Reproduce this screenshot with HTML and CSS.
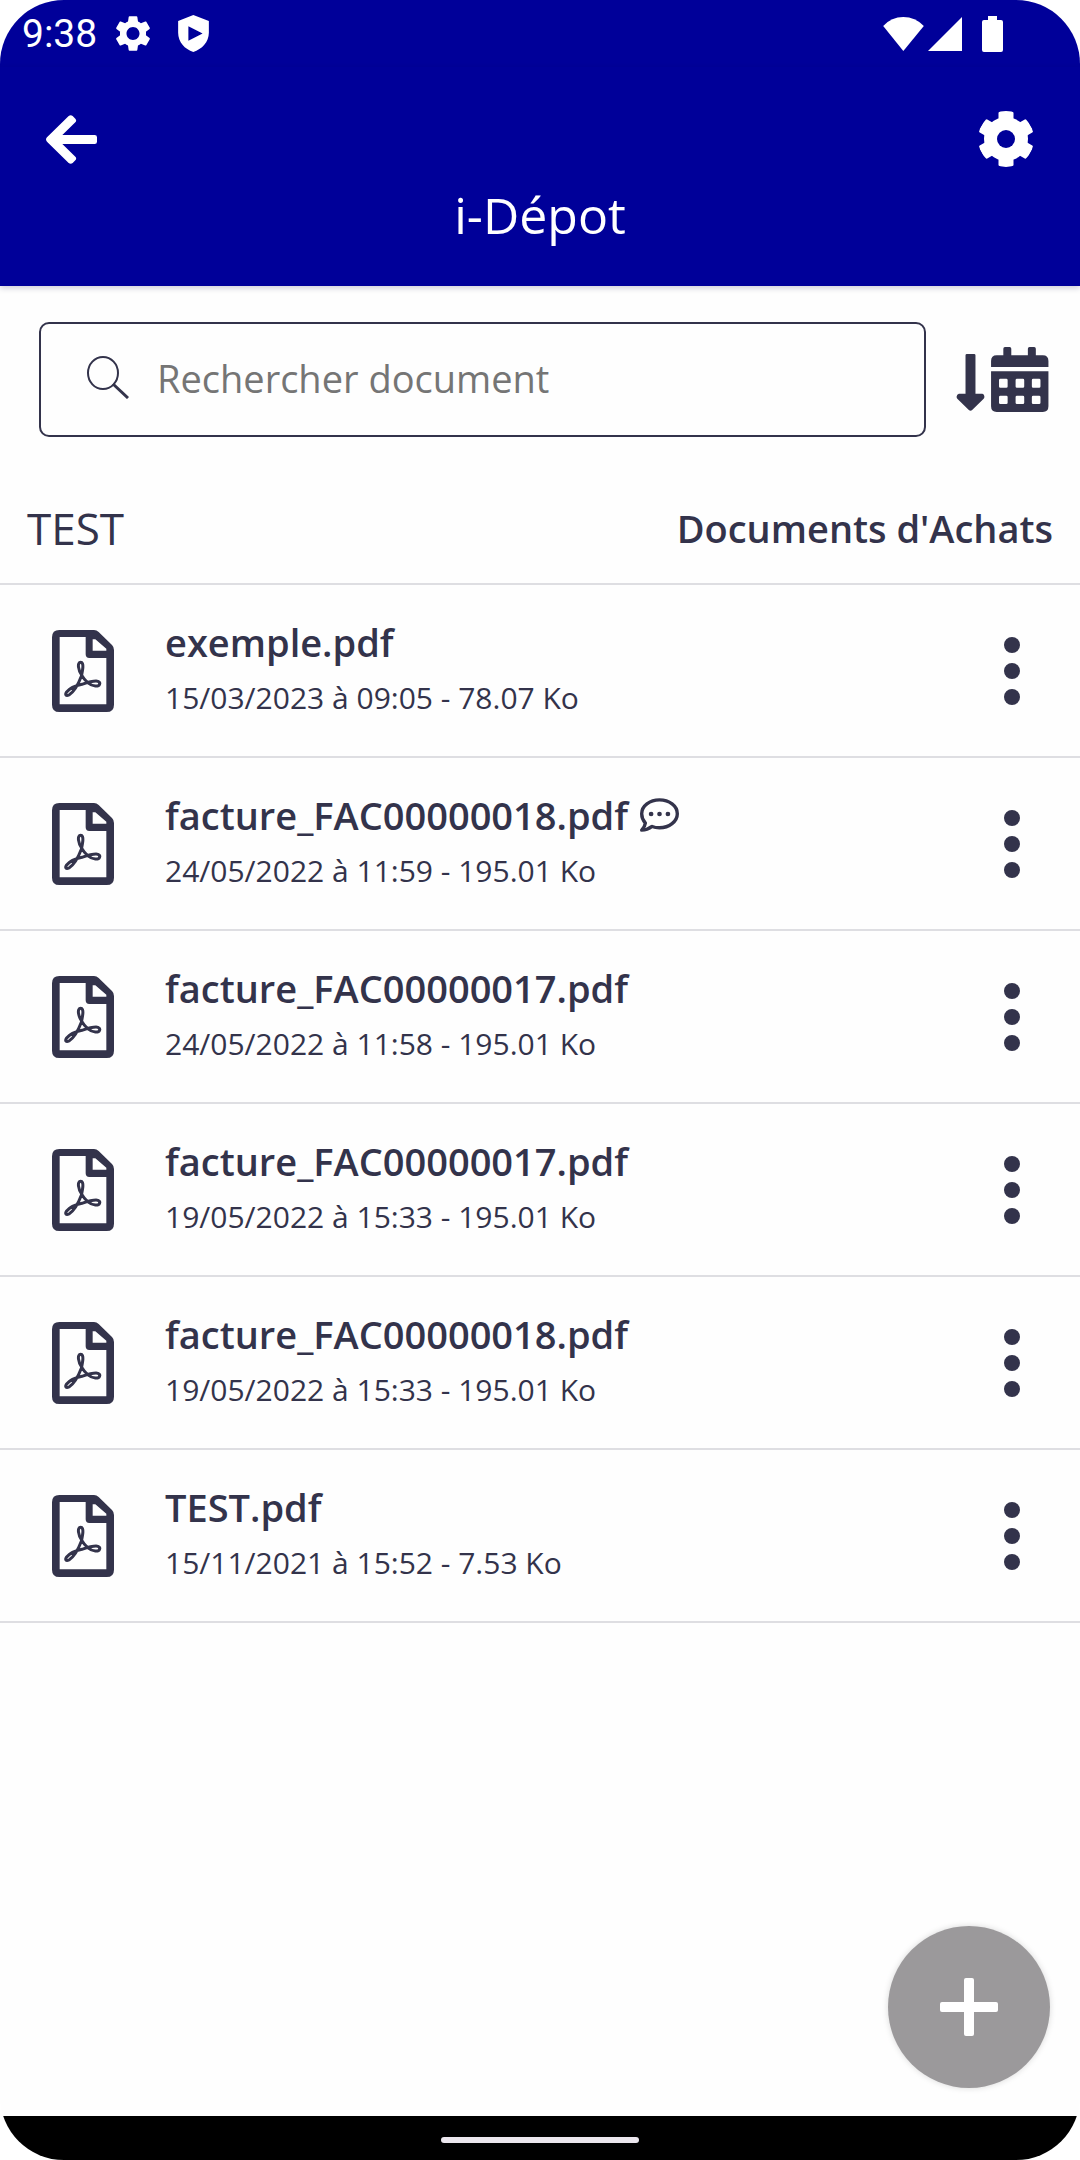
FILE: index.html
```html
<!DOCTYPE html>
<html lang="fr">
<head>
    <meta charset="UTF-8">
    <meta name="viewport" content="width=device-width, initial-scale=1.0">
    <title>i-Dépot</title>
    <link rel="stylesheet" href="styles.css">
</head>
<body>

    <!-- Icônes partagées -->
    <svg class="sprite" aria-hidden="true">
        <symbol id="icon-pdf" viewBox="0 0 186 246">
            <path fill="currentColor" fill-rule="evenodd" d="M22 0H126Q134 0 140 6L180 45Q186 51 186 60V224Q186 246 164 246H22Q0 246 0 224V22Q0 0 22 0ZM23 21V223H163V84H112Q101 84 101 73V21ZM122 28V62H163V56L130 28Z"/>
            <path fill="none" stroke="currentColor" stroke-width="9" stroke-linejoin="round" d="M90 137C78 120 75 97 86 97C97 97 92 120 88 139C80 160 66 186 51 195C42 199 38 194 44 186C52 176 72 167 90 163C108 157 128 151 138 154C147 158 144 169 130 168C114 167 98 152 90 137Z"/>
        </symbol>
        <symbol id="icon-dots" viewBox="0 0 18 70">
            <circle cx="9" cy="9" r="8" fill="currentColor"/>
            <circle cx="9" cy="35" r="8" fill="currentColor"/>
            <circle cx="9" cy="61" r="8" fill="currentColor"/>
        </symbol>
    </svg>

    <div class="screen">
        <!-- Barre d'état -->
        <div class="status-bar">
            <span class="time">9:38</span>
            <svg class="status-gear" viewBox="2.6 2.4 18.8 19.2" aria-hidden="true"><path fill="currentColor" d="M19.14,12.94c0.04-0.3,0.06-0.61,0.06-0.94c0-0.32-0.02-0.64-0.07-0.94l2.03-1.58c0.18-0.14,0.23-0.41,0.12-0.61l-1.92-3.32c-0.12-0.22-0.37-0.29-0.59-0.22l-2.39,0.96c-0.5-0.38-1.03-0.7-1.62-0.94L14.4,2.81c-0.04-0.24-0.24-0.41-0.48-0.41h-3.84c-0.24,0-0.43,0.17-0.47,0.41L9.25,5.35C8.66,5.59,8.12,5.92,7.63,6.29L5.24,5.33c-0.22-0.08-0.47,0-0.59,0.22L2.74,8.87C2.62,9.08,2.66,9.34,2.86,9.48l2.03,1.58C4.84,11.36,4.8,11.69,4.8,12s0.02,0.64,0.07,0.94l-2.03,1.58c-0.18,0.14-0.23,0.41-0.12,0.61l1.92,3.32c0.12,0.22,0.37,0.29,0.59,0.22l2.39-0.96c0.5,0.38,1.03,0.7,1.62,0.94l0.36,2.54c0.05,0.24,0.24,0.41,0.48,0.41h3.84c0.24,0,0.44-0.17,0.47-0.41l0.36-2.54c0.59-0.24,1.13-0.56,1.62-0.94l2.39,0.96c0.22,0.08,0.47,0,0.59-0.22l1.92-3.32c0.12-0.22,0.07-0.47-0.12-0.61L19.14,12.94z M12,15.6c-1.98,0-3.6-1.62-3.6-3.6s1.62-3.6,3.6-3.6s3.6,1.62,3.6,3.6S13.98,15.6,12,15.6z"/></svg>
            <svg class="status-shield" viewBox="0 0 93 112" aria-hidden="true"><path fill="currentColor" fill-rule="evenodd" d="M46 0L93 18V54C93 82 72 104 46 112C20 104 0 82 0 54V18ZM31 34V78L74 56Z"/></svg>
            <div class="status-right">
                <svg class="status-wifi" viewBox="0 0 123 103" aria-hidden="true"><path fill="currentColor" d="M61 103L0 27Q25 0 61 0T123 27Z"/></svg>
                <svg class="status-signal" viewBox="0 0 34 34" aria-hidden="true"><path fill="currentColor" d="M0 34L34 0V34Z"/></svg>
                <svg class="status-battery" viewBox="0 0 63 108" aria-hidden="true"><path fill="currentColor" d="M18 0H45V12H57Q63 12 63 18V102Q63 108 57 108H6Q0 108 0 102V18Q0 12 6 12H18Z"/></svg>
            </div>
        </div>

        <!-- En-tête -->
        <header>
            <div class="toolbar">
                <button type="button" class="icon-button" aria-label="Retour">
                    <svg class="icon-back" viewBox="0 0 153 147" fill="currentColor" aria-hidden="true">
                        <path d="M3 67L68 3Q74-2 80 3L88 11Q93 17 88 22L49 60H146Q153 60 153 67V80Q153 87 146 87H49L88 125Q93 130 88 136L80 144Q74 149 68 144L3 80Q-3 73 3 67Z"/>
                    </svg>
                </button>
                <button type="button" class="icon-button" aria-label="Paramètres">
                    <svg class="icon-settings" viewBox="-28 -29 56 58" aria-hidden="true">
                        <mask id="gear-hole">
                            <circle r="28" fill="white"/>
                            <circle r="9" fill="black"/>
                        </mask>
                        <g fill="currentColor" mask="url(#gear-hole)">
                            <circle r="22"/>
                            <rect x="-7.500" y="-28" width="15" height="56" rx="2"/>
                            <rect x="-7.500" y="-28" width="15" height="56" rx="2" transform="rotate(60)"/>
                            <rect x="-7.500" y="-28" width="15" height="56" rx="2" transform="rotate(120)"/>
                        </g>
                    </svg>
                </button>
            </div>
            <h1>i-Dépot</h1>
        </header>

        <main>
            <!-- Recherche et tri -->
            <form class="search-bar">
                <label class="search-box">
                    <svg class="icon-search" viewBox="0 0 43 43" fill="none" stroke="currentColor" aria-hidden="true">
                        <ellipse cx="16" cy="17" rx="15" ry="16" stroke-width="2"/>
                        <path d="M26 28L41 42" stroke-width="3"/>
                    </svg>
                    <input type="search" placeholder="Rechercher document" aria-label="Rechercher document">
                </label>
                <button type="button" class="icon-button" aria-label="Trier par date">
                    <svg class="icon-sort" viewBox="0 0 277 196" fill="currentColor" aria-hidden="true">
                        <path d="M31 21H53Q57 21 57 25V141H78Q84 142 84 150Q84 154 81 157L47 190Q42 195 37 190L3 157Q0 154 0 150Q1 142 7 141H27V25Q27 21 31 21Z"/>
                        <path d="M104 60V42Q104 25 121 25H141V5Q141 0 146 0H160Q165 0 165 5V25H215V5Q215 0 220 0H234Q239 0 239 5V25H260Q277 25 277 42V60Z"/>
                        <path fill-rule="evenodd" d="M104 73H277V179Q277 196 260 196H121Q104 196 104 179ZM132 96Q128 96 128 100V119Q128 123 132 123H150Q154 123 154 119V100Q154 96 150 96ZM182 96Q178 96 178 100V119Q178 123 182 123H200Q204 123 204 119V100Q204 96 200 96ZM231 96Q227 96 227 100V119Q227 123 231 123H249Q253 123 253 119V100Q253 96 249 96ZM132 147Q128 147 128 151V168Q128 172 132 172H150Q154 172 154 168V151Q154 147 150 147ZM182 147Q178 147 178 151V168Q178 172 182 172H200Q204 172 204 168V151Q204 147 200 147ZM231 147Q227 147 227 151V168Q227 172 231 172H249Q253 172 253 168V151Q253 147 249 147Z"/>
                    </svg>
                </button>
            </form>

            <div class="folder">
                <span class="folder-name">TEST</span>
                <h2>Documents d'Achats</h2>
            </div>

            <!-- Liste des documents -->
            <ul class="documents">
                <li class="document">
                    <svg class="icon-pdf" aria-hidden="true"><use href="#icon-pdf"/></svg>
                    <div class="document-info">
                        <a href="#" class="document-name">exemple.pdf</a>
                        <p>15/03/2023 à 09:05 - 78.07 Ko</p>
                    </div>
                    <button type="button" class="icon-button" aria-label="Options"><svg class="icon-dots" aria-hidden="true"><use href="#icon-dots"/></svg></button>
                </li>
                <li class="document">
                    <svg class="icon-pdf" aria-hidden="true"><use href="#icon-pdf"/></svg>
                    <div class="document-info">
                        <a href="#" class="document-name">facture_FAC00000018.pdf
                            <svg class="icon-comment" viewBox="0 0 116 100" aria-hidden="true">
                                <path fill="none" stroke="currentColor" stroke-width="10" stroke-linejoin="round" d="M58 5C87 5 111 23 111 46S87 88 58 88C50 88 43 87 36 84C27 91 17 95 5 95C11 89 15 82 16 74C9 66 5 56 5 46C5 23 29 5 58 5Z"/>
                                <circle cx="33" cy="47" r="7" fill="currentColor"/>
                                <circle cx="58" cy="47" r="7" fill="currentColor"/>
                                <circle cx="83" cy="47" r="7" fill="currentColor"/>
                            </svg>
                        </a>
                        <p>24/05/2022 à 11:59 - 195.01 Ko</p>
                    </div>
                    <button type="button" class="icon-button" aria-label="Options"><svg class="icon-dots" aria-hidden="true"><use href="#icon-dots"/></svg></button>
                </li>
                <li class="document">
                    <svg class="icon-pdf" aria-hidden="true"><use href="#icon-pdf"/></svg>
                    <div class="document-info">
                        <a href="#" class="document-name">facture_FAC00000017.pdf</a>
                        <p>24/05/2022 à 11:58 - 195.01 Ko</p>
                    </div>
                    <button type="button" class="icon-button" aria-label="Options"><svg class="icon-dots" aria-hidden="true"><use href="#icon-dots"/></svg></button>
                </li>
                <li class="document">
                    <svg class="icon-pdf" aria-hidden="true"><use href="#icon-pdf"/></svg>
                    <div class="document-info">
                        <a href="#" class="document-name">facture_FAC00000017.pdf</a>
                        <p>19/05/2022 à 15:33 - 195.01 Ko</p>
                    </div>
                    <button type="button" class="icon-button" aria-label="Options"><svg class="icon-dots" aria-hidden="true"><use href="#icon-dots"/></svg></button>
                </li>
                <li class="document">
                    <svg class="icon-pdf" aria-hidden="true"><use href="#icon-pdf"/></svg>
                    <div class="document-info">
                        <a href="#" class="document-name">facture_FAC00000018.pdf</a>
                        <p>19/05/2022 à 15:33 - 195.01 Ko</p>
                    </div>
                    <button type="button" class="icon-button" aria-label="Options"><svg class="icon-dots" aria-hidden="true"><use href="#icon-dots"/></svg></button>
                </li>
                <li class="document">
                    <svg class="icon-pdf" aria-hidden="true"><use href="#icon-pdf"/></svg>
                    <div class="document-info">
                        <a href="#" class="document-name">TEST.pdf</a>
                        <p>15/11/2021 à 15:52 - 7.53 Ko</p>
                    </div>
                    <button type="button" class="icon-button" aria-label="Options"><svg class="icon-dots" aria-hidden="true"><use href="#icon-dots"/></svg></button>
                </li>
            </ul>

            <!-- Bouton flottant -->
            <button type="button" class="add-button" aria-label="Ajouter un document">
                <svg class="icon-plus" viewBox="0 0 58 58" fill="currentColor" aria-hidden="true">
                    <rect x="24" y="0" width="10" height="58" rx="2"/>
                    <rect x="0" y="24" width="58" height="10" rx="2"/>
                </svg>
            </button>
        </main>

        <!-- Barre de navigation du téléphone -->
        <div class="system-bar"><span class="handle"></span></div>
    </div>

</body>
</html>
```

FILE: styles.css
```css
* {
    box-sizing: border-box;
}

body {
    margin: 0;
    font-family: 'Open Sans', 'Noto Sans', sans-serif;
    background: #fff;
    color: #33334b;
}

.sprite {
    display: none;
}

svg {
    display: block;
    flex: none;
}

.screen {
    display: flex;
    flex-direction: column;
    min-height: 100vh;
    border-radius: 64px;
    overflow: hidden;
    background: #fefefe;
}

.icon-button {
    display: flex;
    padding: 0;
    border: none;
    background: none;
    color: inherit;
    cursor: pointer;
}

/* Barre d'état */
.status-bar {
    display: flex;
    align-items: center;
    height: 67px;
    padding: 0 77px 0 22px;
    background: #000099;
    color: #fff;
}

.time {
    margin-right: 19px;
    font-family: Roboto, sans-serif;
    font-size: 39px;
}

.status-gear {
    width: 34px;
    height: 35px;
    margin-right: 28px;
}

.status-shield {
    width: 31px;
    height: 37px;
}

.status-right {
    display: flex;
    align-items: center;
    margin-left: auto;
}

.status-wifi {
    width: 41px;
    height: 34px;
    margin-right: 4px;
}

.status-signal {
    width: 34px;
    height: 34px;
    margin-right: 20px;
}

.status-battery {
    width: 21px;
    height: 36px;
}

/* En-tête */
header {
    height: 219px;
    padding: 42px 46px 0;
    background: #000099;
    color: #fff;
    box-shadow: 0 2px 6px rgba(0, 0, 60, 0.2);
    z-index: 1;
}

.toolbar {
    display: flex;
    justify-content: space-between;
    align-items: center;
    height: 60px;
}

.icon-back {
    width: 51px;
    height: 49px;
}

.icon-settings {
    width: 56px;
    height: 58px;
}

h1 {
    margin: 11px 0 0;
    font-size: 50px;
    font-weight: 400;
    line-height: 70px;
    text-align: center;
}

/* Contenu principal */
main {
    position: relative;
    flex: 1;
}

.search-bar {
    display: flex;
    align-items: center;
    gap: 30px;
    padding: 36px 31px 25px 39px;
}

.search-box {
    display: flex;
    flex: 1;
    align-items: center;
    gap: 27px;
    height: 115px;
    padding: 0 46px 4px;
    border: 2px solid #33334b;
    border-radius: 10px;
}

.search-box input {
    flex: 1;
    min-width: 0;
    padding: 0;
    border: none;
    outline: none;
    background: none;
    font: inherit;
    font-size: 38px;
    color: inherit;
}

.search-box input::placeholder {
    color: #757575;
    opacity: 1;
}

.icon-search {
    width: 43px;
    height: 43px;
}

.icon-sort {
    width: 93px;
    height: 65px;
}

.folder {
    display: flex;
    justify-content: space-between;
    align-items: center;
    height: 123px;
    padding: 10px 27px 0;
    border-bottom: 2px solid #dedee2;
}

.folder-name {
    font-size: 44px;
}

h2 {
    margin: 0;
    font-size: 38px;
    font-weight: 600;
}

/* Liste des documents */
.documents {
    margin: 0;
    padding: 0;
    list-style: none;
}

.document {
    display: flex;
    align-items: center;
    height: 173px;
    padding: 0 59px 0 52px;
    border-bottom: 2px solid #dedee2;
}

.icon-pdf {
    width: 62px;
    height: 82px;
}

.document-info {
    flex: 1;
    padding: 0 0 2px 51px;
}

.document-name {
    display: flex;
    align-items: center;
    gap: 12px;
    color: inherit;
    font-size: 38px;
    font-weight: 600;
    line-height: 56px;
    text-decoration: none;
}

.document-info p {
    margin: 0;
    font-size: 30px;
    line-height: 56px;
}

.icon-comment {
    width: 39px;
    height: 34px;
}

.icon-dots {
    width: 18px;
    height: 70px;
}

/* Bouton flottant */
.add-button {
    position: absolute;
    right: 30px;
    bottom: 28px;
    display: flex;
    justify-content: center;
    align-items: center;
    width: 162px;
    height: 162px;
    padding: 0;
    border: none;
    border-radius: 50%;
    background: #9b999b;
    color: #fff;
    box-shadow: 0 0 6px rgba(0, 0, 0, 0.15);
    cursor: pointer;
}

.icon-plus {
    width: 58px;
    height: 58px;
}

/* Barre système */
.system-bar {
    display: flex;
    justify-content: center;
    align-items: center;
    height: 44px;
    padding-top: 4px;
    background: #000;
}

.handle {
    width: 198px;
    height: 6px;
    border-radius: 3px;
    background: #ebe7ee;
}
```
